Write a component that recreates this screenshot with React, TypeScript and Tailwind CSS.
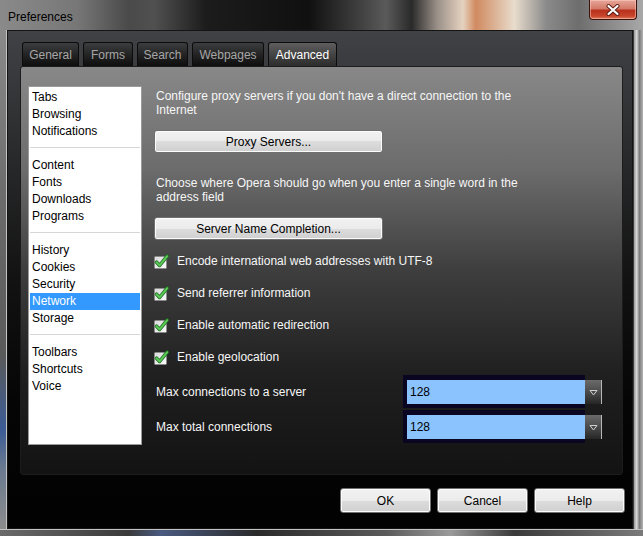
import React from 'react';

const tabs = [
  { label: 'General', w: 'w-[57px]' },
  { label: 'Forms', w: 'w-[50px]' },
  { label: 'Search', w: 'w-[51px]' },
  { label: 'Webpages', w: 'w-[72px]' },
  { label: 'Advanced', w: 'w-[69px]', active: true },
];

const groups = [
  ['Tabs', 'Browsing', 'Notifications'],
  ['Content', 'Fonts', 'Downloads', 'Programs'],
  ['History', 'Cookies', 'Security', 'Network', 'Storage'],
  ['Toolbars', 'Shortcuts', 'Voice'],
];

const checks = [
  'Encode international web addresses with UTF-8',
  'Send referrer information',
  'Enable automatic redirection',
  'Enable geolocation',
];

// Win7 style push button, size is given where it is used
const winButton =
  'rounded-[3px] border border-[#707070] bg-[linear-gradient(to_bottom,#f2f2f2_0%,#ebebeb_50%,#dddddd_50%,#cfcfcf_100%)] shadow-[inset_0_0_0_1px_#fcfcfc] text-[12px] leading-none text-black flex items-center justify-center';

const CheckIcon = () => (
  <svg width="16" height="16" viewBox="0 0 16 16" className="shrink-0 -ml-[2px]">
    <defs>
      <linearGradient id="cbg" x1="0" y1="0" x2="1" y2="1">
        <stop offset="0" stopColor="#d8d8d8" />
        <stop offset="1" stopColor="#fbfbfb" />
      </linearGradient>
    </defs>
    <rect x="0.5" y="3.5" width="12" height="12" rx="1" fill="url(#cbg)" stroke="#8a8a8a" />
    <path d="M2.6 9.2 L5.6 12.4 L13.2 3.2" fill="none" stroke="#1f6e24" strokeWidth="3.6" strokeLinecap="round" strokeLinejoin="round" />
    <path d="M2.6 9.2 L5.6 12.4 L13.2 3.2" fill="none" stroke="#5ccb55" strokeWidth="2" strokeLinecap="round" strokeLinejoin="round" />
  </svg>
);

const Combo = ({ label }: { label: string }) => (
  <div className="flex items-center h-[33px]">
    <span className="w-[247px]">{label}</span>
    <div className="flex">
      <div className="w-[182px] h-[33px] bg-[#0a0520] pl-[4px] pt-[5px]">
        <div className="h-[24px] bg-[#8bc3ff] text-black pl-[3px] leading-[24px]">128</div>
      </div>
      <div className="mt-[5px] w-[17px] h-[24px] bg-[linear-gradient(to_bottom,#6b6b6b_0%,#4a4a4a_50%,#262626_100%)] border-r border-[#b8b8b8] flex items-center justify-center">
        <svg width="9" height="7" viewBox="0 0 9 7">
          <path d="M1 1.5 L8 1.5 L4.5 6 Z" fill="none" stroke="#d0d0d0" strokeWidth="1" />
        </svg>
      </div>
    </div>
  </div>
);

export default function App() {
  return (
    <div className="w-[643px] h-[536px] flex flex-col overflow-hidden bg-[#7a7a7a] font-['Liberation_Sans',Arial,sans-serif] text-[12px]">
      {/* Title bar */}
      <div className="h-[30px] shrink-0 flex items-start justify-between bg-[linear-gradient(to_right,#8a8a8a_0%,#777777_12%,#4a4a4a_20%,#505050_24%,#1c1c1c_32%,#101010_48%,#3a3a3a_55%,#5a5a5a_60%,#2a2a2a_64%,#9a9088_68%,#e6d2c0_72%,#d08a60_74%,#e8dccc_80%,#8a8a8a_85%,#6e6e6e_90%,#a8a8a8_100%)]">
        <span className="pl-[8px] pt-[8px] text-[#000000]">Preferences</span>
        <div className="mr-[6px] w-[48px] h-[20px] rounded-b-[4px] border border-t-0 border-[#3c120c] bg-[linear-gradient(to_bottom,#e7a79a_0%,#d47a68_45%,#b8321d_55%,#c8452c_85%,#e0805c_100%)] shadow-[inset_0_0_0_1px_rgba(255,210,200,0.5)] flex items-center justify-center">
          <svg width="14" height="12" viewBox="0 0 14 12">
            <path d="M2.5 2 L11.5 10 M11.5 2 L2.5 10" stroke="#5a1a10" strokeWidth="4" strokeLinecap="round" />
            <path d="M2.5 2 L11.5 10 M11.5 2 L2.5 10" stroke="#ffffff" strokeWidth="2.2" strokeLinecap="round" />
          </svg>
        </div>
      </div>

      <div className="flex flex-1">
        {/* left frame */}
        <div className="w-[7px] shrink-0 border-r border-[#c4c4c4] bg-[linear-gradient(to_bottom,#8a8a8a_0%,#6a6a6a_35%,#5a5a5a_65%,#3c5c96_80%,#6a7a90_88%,#8c8c8c_100%)]" />

        {/* client area */}
        <div className="w-[626px] border border-[#141414] bg-[linear-gradient(to_bottom,#414246_0%,#2e2f31_20%,#121212_50%,#050505_75%,#020202_100%)] flex flex-col">
          <div className="pl-[12px] pr-[9px] pt-[11px]">
            {/* tabs */}
            <div className="flex gap-[4px] pl-[2px] h-[24px]">
              {tabs.map((t) => (
                <div
                  key={t.label}
                  className={`${t.w} h-[24px] rounded-t-[3px] border border-b-0 border-[#0c0c0c] flex items-center justify-center ${
                    t.active
                      ? 'bg-[linear-gradient(to_bottom,#5e5e5e_0%,#444444_50%,#2c2c2c_100%)] text-white'
                      : 'bg-[linear-gradient(to_bottom,#3c3d3f_0%,#242424_50%,#0e0e0e_100%)] text-[#a6a6a6]'
                  }`}
                >
                  {t.label}
                </div>
              ))}
            </div>

            {/* panel */}
            <div className="h-[409px] rounded-[3px] border border-[#1c1c1c] bg-[linear-gradient(to_bottom,#888888_0%,#6c6c6c_25%,#3e3e3e_50%,#202020_75%,#131313_100%)] flex items-start pl-[7px] pt-[19px]">
              {/* sidebar */}
              <div className="w-[114px] h-[359px] bg-white border border-[#9a9a9a] pt-[2px] px-[1px] text-black">
                {groups.map((g, gi) => (
                  <div key={gi}>
                    {gi > 0 && <div className="h-px bg-[#d6d6d6] mt-[7px] mb-[9px]" />}
                    {g.map((item) => (
                      <div
                        key={item}
                        className={`h-[17px] leading-[17px] pl-[2px] ${
                          item === 'Network' ? 'bg-[#3399ff] text-white' : ''
                        }`}
                      >
                        {item}
                      </div>
                    ))}
                  </div>
                ))}
              </div>

              {/* content */}
              <div className="ml-[14px] pt-[3px] text-[#f6f6f6] flex flex-col">
                <p className="leading-[14px]">
                  Configure proxy servers if you don't have a direct connection to the
                  <br />
                  Internet
                </p>
                <button className={`${winButton} -ml-[2px] mt-[13px] w-[229px] h-[23px]`}>Proxy Servers...</button>
                <p className="leading-[14px] mt-[23px]">
                  Choose where Opera should go when you enter a single word in the
                  <br />
                  address field
                </p>
                <button className={`${winButton} -ml-[2px] mt-[13px] w-[229px] h-[23px]`}>Server Name Completion...</button>

                <div className="mt-[5px]">
                  {checks.map((c) => (
                    <div key={c} className="h-[32px] flex items-center">
                      <CheckIcon />
                      <span className="ml-[7px]">{c}</span>
                    </div>
                  ))}
                </div>

                <div className="mt-[2px] flex flex-col gap-[2px]">
                  <Combo label="Max connections to a server" />
                  <Combo label="Max total connections" />
                </div>
              </div>
            </div>
          </div>

          {/* dialog buttons */}
          <div className="flex justify-end gap-[6px] pr-[7px] mt-[13px]">
            <button className={`${winButton} w-[91px] h-[25px]`}>OK</button>
            <button className={`${winButton} w-[91px] h-[25px]`}>Cancel</button>
            <button className={`${winButton} w-[91px] h-[25px]`}>Help</button>
          </div>
        </div>

        {/* right frame */}
        <div className="w-[10px] shrink-0 border-l border-[#3a3a3a] bg-[linear-gradient(to_right,#9a9a9a_0%,#d8d8d8_30%,#7a7a7a_60%,#b4b4b4_100%)]" />
      </div>

      {/* bottom frame */}
      <div className="h-[7px] shrink-0 border-t border-[#c4c4c4] bg-[linear-gradient(to_right,#6a6a6a_0%,#3a3a3a_20%,#4a5a80_25%,#2a2a2a_40%,#5a5a5a_60%,#9a9a9a_70%,#3a3a3a_80%,#7a7a7a_100%)]" />
    </div>
  );
}
